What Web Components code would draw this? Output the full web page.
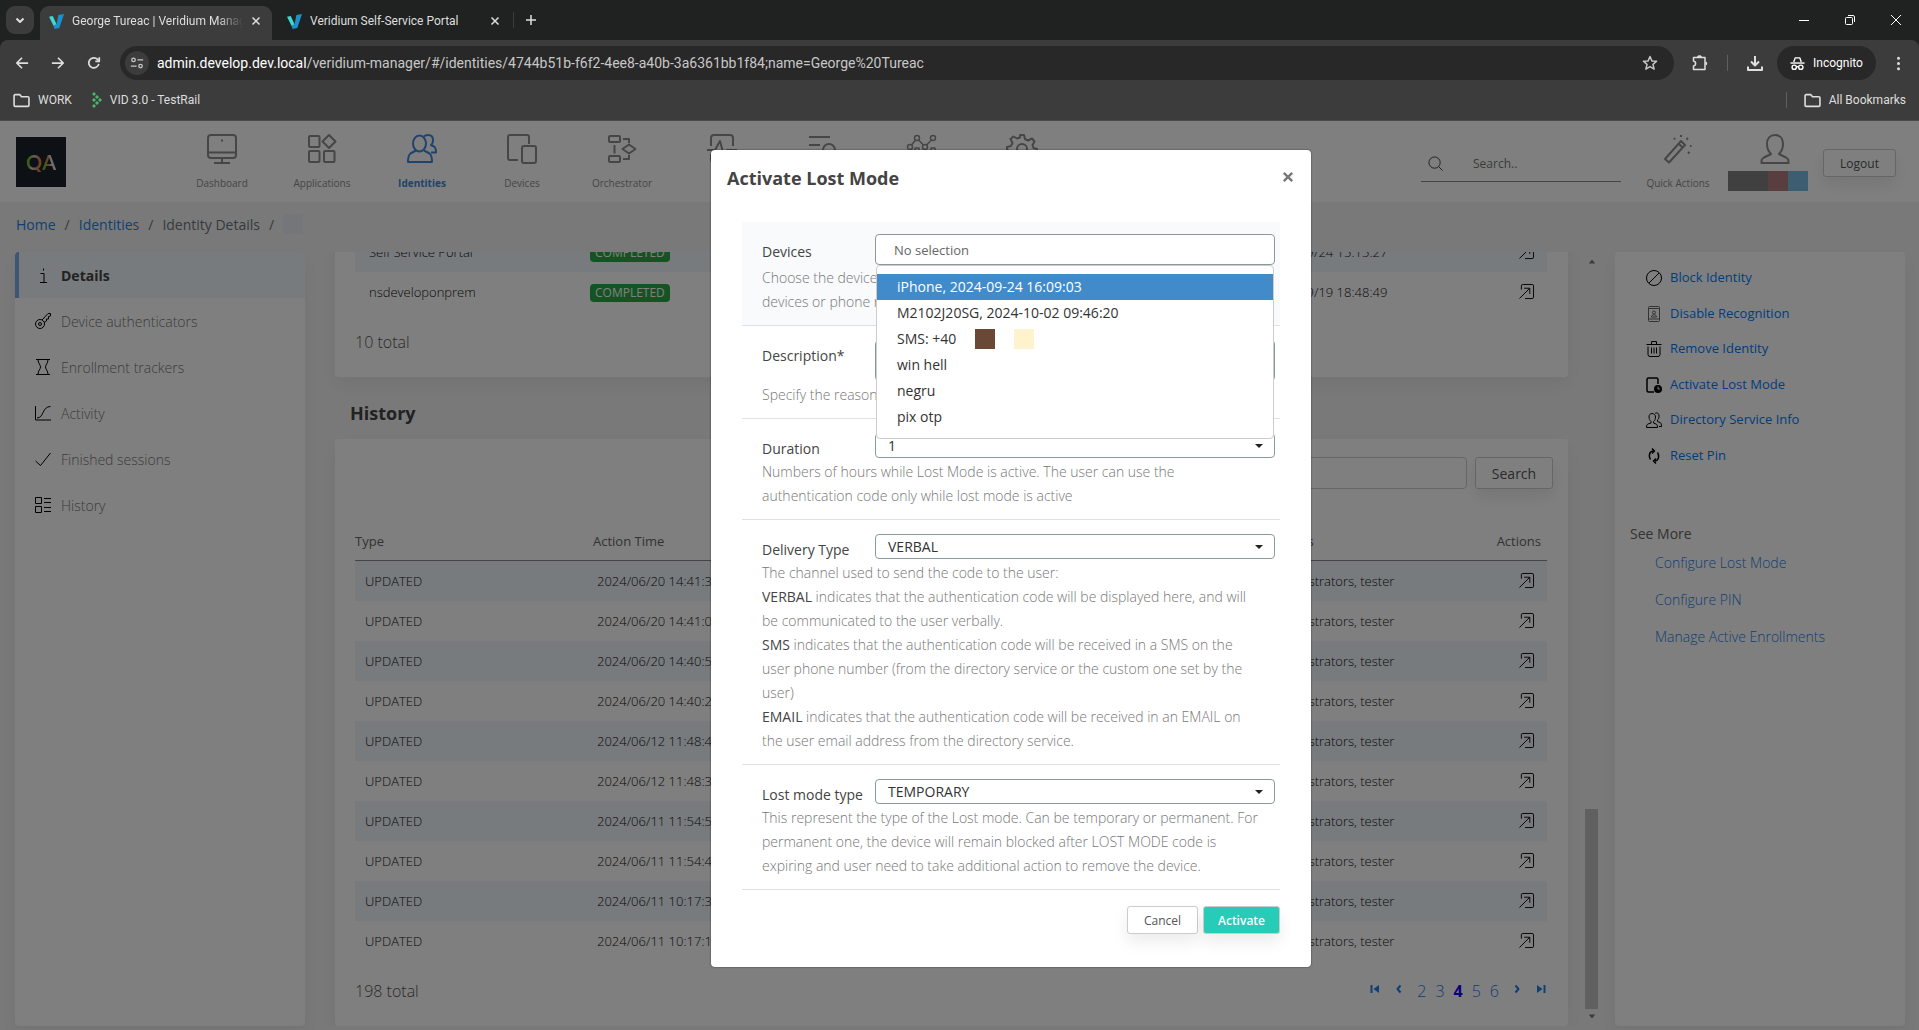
<!DOCTYPE html>
<html lang="en">
<head>
<meta charset="utf-8">
<title>George Tureac | Veridium Manager</title>
<style>
    html, body {
        height: 100%;
        margin: 0;
    }
    body {
        display: flex;
        flex-direction: column;
        overflow: hidden;
        font-family: "Open Sans", "Noto Sans", sans-serif;
        font-size: 14px;
        color: #55595c;
        background: #f3f3f3;
    }
</style>
</head>
<body>
<browser-chrome></browser-chrome>
<manager-app></manager-app>

<script>
const ICONS = {
    dashboard: ['0 0 30 30', '<rect x="1" y="1" width="28" height="23" rx="3"/><path d="M1 18.500h28M15 24v5M7 29h16"/><path d="M15 5.500v2"/>'],
    apps: ['0 0 30 30', '<rect x="2" y="2" width="10.500" height="11" rx="1"/><rect x="2" y="17" width="10.500" height="11" rx="1"/><rect x="17" y="17" width="10.500" height="11" rx="1"/><path d="M22 1l6.500 6.500-6.500 6.500-6.500-6.500z"/>'],
    identities: ['0 0 30 30', '<ellipse cx="12.500" cy="9.500" rx="6.500" ry="8"/><path d="M9 16.500l-5.500 3C1.500 21 1 23 1 28h24c0-5-.500-7-2.500-8.500l-5.500-3"/><path d="M17 2.500C18 1.300 19.500 1 21 1c3 0 5 2 5 5 0 2-.500 4-2 5l3 1.500c1.500 1 2 2.500 2 6h-5"/>'],
    devices: ['0 0 30 30', '<path d="M11 26H3a2 2 0 0 1-2-2V3a2 2 0 0 1 2-2h17a2 2 0 0 1 2 2v7"/><rect x="15" y="12" width="14" height="17" rx="2"/>'],
    orchestrator: ['0 0 30 30', '<rect x="2" y="2" width="11" height="6" rx="1"/><rect x="2" y="22" width="11" height="6" rx="1"/><path d="M7.500 11v8.500M16 5h6v4M16 25h6v-4M22 10.500l6.500 4.500-6.500 4.500-6.500-4.500z"/>'],
    pulse: ['0 0 30 30', '<path d="M4 12V4a3 3 0 0 1 3-3h16a3 3 0 0 1 3 3v8M0 16h8l5-9 4 15 3-6h10M4 20v5a3 3 0 0 0 3 3h16a3 3 0 0 0 3-3v-5"/>'],
    listsearch: ['0 0 30 30', '<path d="M2 3h21M2 11h11M2 19h9M22 26l5 4"/><circle cx="22" cy="16" r="6"/>'],
    chart: ['0 0 30 30', '<g stroke-width="1.500"><path d="M4.500 11l4-5M11.500 6l5 5M19.500 11l5-5"/><circle cx="3" cy="13" r="2.500"/><circle cx="10" cy="4" r="2.500"/><circle cx="18" cy="13" r="2.500"/><circle cx="26" cy="4" r="2.500"/><path d="M1 29V19h4v10M8 29V14h4v15M16 29V19h4v10M24 29V14h4v15"/></g>'],
    gear: ['0 0 30 30', '<circle cx="15" cy="15" r="5"/><path d="M13 1h4l1 4 3 1.500 4-2 2.500 3-2 3.500 1 3 3.500 1v4l-4 1-1.500 3 2 4-3 2.500-3.500-2-3 1-1 3.500h-4l-1-4-3-1.500-4 2-2.500-3 2-3.500-1-3L0 15l0-2 4-1 1.500-3-2-4 3-2.500 3.500 2 3-1z"/>'],
    wand: ['0 0 30 30', '<path d="M2 25L18 7l4 4L6 28.500zM16 10l3.500 3.500M18 1v2M18 1v1M11 4l1 1.500M25 4l-1.500 1.500M27 12h1.500M25 18l1.500 1.500"/>'],
    person: ['0 0 30 30', '<path d="M15 1c-5 0-8 3.500-8 9s2 8 4 10l-7 3.500C1.500 25 1.500 26 1.500 29h27c0-3 0-4-2.500-5.500L19 20c2-2 4-4.500 4-10s-3-9-8-9z"/>'],
    search: ['0 0 16 16', '<ellipse cx="7" cy="7" rx="6" ry="6"/><path d="M11.500 11.500l4 4"/>'],
    info: ['0 0 16 16', '<path d="M5.500 6.500H9V15M5 15.500h7M8.500 1.500v2"/>'],
    key: ['0 0 16 16', '<circle cx="5" cy="11" r="4.500"/><circle cx="5" cy="11" r="1.500"/><path d="M7 7l6-6.500h2.500V3l-2 .500V6h-2v2L9 9.500"/>'],
    hourglass: ['0 0 16 16', '<path d="M1 .500h14M1 15.500h14M3 .500c0 4 2.500 5 2.500 7.500S3 11.500 3 15.500M13 .500c0 4-2.500 5-2.500 7.500s2.500 3.500 2.500 7.500"/>'],
    curve: ['0 0 16 16', '<path d="M.500 1v14H16M2 13c7 0 5-11.500 13.500-11.500"/>'],
    check: ['0 0 16 16', '<path d="M.500 10l5 4.500L15.500 2"/>'],
    list: ['0 0 16 16', '<path d="M.500 .500h6v6h-6zM.500 9.500h6v6h-6zM9 1.500h7M9 5.500h7M9 10.500h7M9 14.500h7"/>'],
    block: ['0 0 16 16', '<circle cx="8" cy="8" r="7.500"/><path d="M3 13L13 3"/>'],
    badge: ['0 0 16 16', '<g stroke="#666"><rect x="2.500" y=".500" width="11" height="15" rx="1"/><path d="M2.500 2.500h11M2.500 13h11"/><circle cx="8" cy="6.500" r="1.500"/><path d="M5.500 11c0-3 5-3 5 0z"/></g>'],
    trash: ['0 0 16 16', '<path d="M.500 3.500h15M5.500 3V.500h5V3M2 5.500v8a2 2 0 0 0 2 2h8a2 2 0 0 0 2-2v-8M5.500 6.500v6M8 6.500v6M10.500 6.500v6"/>'],
    lost: ['0 0 16 16', '<path stroke-width="1.500" d="M8 15H2.500a1.500 1.500 0 0 1-1.500-1.500v-11A1.500 1.500 0 0 1 2.500 1h8A1.500 1.500 0 0 1 12 2.500V7"/><circle cx="12" cy="12" r="4" fill="currentColor" stroke="none"/><path d="M12 9.500V12h2" stroke="#fff"/>'],
    people: ['0 0 16 16', '<path d="M6 1.500C4 1.500 3 3 3 5s1 3.500 2 4.500v1.500l-3 1c-1 .500-1.500 1-1.500 3.500h11c0-2.500-.500-3-1.500-3.500l-2.500-1V9.500C9 8.500 9.500 7 9.500 5S8 1.500 6 1.500zM9 1.500C10 .500 13 .500 13 4c0 2-.500 3.500-1.500 4v1.500l2.500 1c1 .500 1.500 1.500 1.500 4H13"/>'],
    reset: ['0 0 16 16', '<g stroke-width="1.500"><path d="M7 3C3 3.500 2.500 8.500 4.500 11.500M9 13c4-.500 4.500-5.500 2.500-8.500"/><path d="M6 .500L8.500 3 6 5.500M10 10.500L7.500 13l2.500 2.500"/></g>'],
    open: ['0 0 16 16', '<path d="M2.500 6V2a1.500 1.500 0 0 1 1.500-1.500h10A1.500 1.500 0 0 1 15.500 2v12a1.500 1.500 0 0 1-1.500 1.500H6.500M.500 15.500L11.500 4.500M5.500 4.500h6v6"/>'],
    first: ['0 0 10 10', '<path d="M1.500 1v8"/><path d="M9 1v8L3.500 5z" fill="currentColor" stroke="none"/>'],
    last: ['0 0 10 10', '<path d="M8.500 1v8"/><path d="M1 1v8l5.500-4z" fill="currentColor" stroke="none"/>'],
    prev: ['0 0 10 10', '<path d="M6.500 1.500L3.500 5l3 3.500"/>'],
    next: ['0 0 10 10', '<path d="M3.500 1.500l3 3.500-3 3.500"/>'],
    caret: ['0 0 10 10', '<path d="M1 3h8L5 7z" fill="currentColor" stroke="none"/>'],
    up: ['0 0 10 10', '<path d="M1 8h8L5 3z" fill="currentColor" stroke="none"/>'],
    close: ['0 0 10 10', '<path d="M1.500 1.500l7 7M8.500 1.500l-7 7"/>'],
    veridium: ['0 0 16 16', '<path d="M0 3l4-1 4 9-2 4z" fill="#40d8d0" stroke="none"/><path d="M10 1l6-1-5 15-5 1-1-4 3-1z" fill="#1a90cc" stroke="none"/>'],
    chevron: ['0 0 10 10', '<path d="M1.500 3.500L5 7l3.500-3.500"/>'],
    plus: ['0 0 12 12', '<path d="M6 1v10M1 6h10"/>'],
    back: ['0 0 16 16', '<path d="M15 8H2M8 2L2 8l6 6"/>'],
    forward: ['0 0 16 16', '<path d="M1 8h13M8 2l6 6-6 6"/>'],
    reload: ['0 0 16 16', '<path d="M13.500 9A5.800 5.800 0 1 1 12 3.800L14 6"/><path d="M14 1.500V6H9.500"/>'],
    tune: ['0 0 16 16', '<circle cx="4" cy="4.500" r="2"/><path d="M8.500 4.500H15M1 11.500h6.500"/><circle cx="12" cy="11.500" r="2"/>'],
    star: ['0 0 16 16', '<path d="M8 1.500l1.900 4.400 4.700.400-3.600 3.100 1.100 4.700L8 11.700l-4.100 2.400L5 9.400 1.400 6.300l4.700-.400z"/>'],
    extension: ['0 0 16 16', '<path d="M1.500 2.500H13V14.500H1.500V11c2.800-.500 2.800-4.500 0-5z"/><path d="M5 2C5.500-.300 9.500-.300 10 2zM13.500 6.500c2.300.500 2.300 3.500 0 4z" fill="currentColor" stroke="none"/>'],
    download: ['0 0 16 16', '<path d="M8 1v9M4 6.500L8 10.500l4-4M1 11.500V15h14v-3.500"/>'],
    incognito: ['0 0 16 16', '<path d="M4 6.500L5.500 2h5L12 6.500" /><path d="M.500 7.500h15"/><circle cx="4.500" cy="12" r="2.300"/><circle cx="11.500" cy="12" r="2.300"/><path d="M7 11.500h2"/>'],
    dots: ['0 0 16 16', '<g fill="currentColor" stroke="none"><circle cx="8" cy="2.500" r="1.600"/><circle cx="8" cy="8" r="1.600"/><circle cx="8" cy="13.500" r="1.600"/></g>'],
    folder: ['0 0 16 16', '<path d="M1 3.500A1 1 0 0 1 2 2.500h4.500l1.500 2h6a1 1 0 0 1 1 1v7a1 1 0 0 1-1 1H2a1 1 0 0 1-1-1z"/>'],
    testrail: ['4 0 10 16', '<g fill="#48b868" stroke="none"><path d="M6 0l2 2-2 2-2-2zM9 3l2 2-2 2-2-2zM12 6l2 2-2 2-2-2zM9 9l2 2-2 2-2-2zM6 12l2 2-2 2-2-2zM6 6l2 2-2 2-2-2z"/></g>'],
    minimize: ['0 0 12 12', '<path d="M1 6.500h10"/>'],
    restore: ['0 0 12 12', '<rect x="1.500" y="3.500" width="7" height="7" rx="1"/><path d="M4 1.500h5a1.500 1.500 0 0 1 1.500 1.500v5"/>'],
    winclose: ['0 0 12 12', '<path d="M1 1l10 10M11 1L1 11"/>']
};

// <ui-icon name="check" size="16" weight="1">, size is the height
class UiIcon extends HTMLElement {
    connectedCallback() {
        const [box, body] = ICONS[this.getAttribute('name')];
        const [, , w, h] = box.split(' ');
        const size = this.getAttribute('size') || 16;
        const weight = this.getAttribute('weight') || 1;
        this.attachShadow({ mode: 'open' }).innerHTML = `
            <style>
                :host { display: inline-flex; flex: none; }
                svg { display: block; overflow: visible; }
            </style>
            <svg width="${size * w / h}" height="${size}" viewBox="${box}" fill="none" stroke="currentColor"
                 stroke-width="${weight}" stroke-linejoin="round" aria-hidden="true">${body}</svg>
        `;
    }
}
customElements.define('ui-icon', UiIcon);

class BrowserChrome extends HTMLElement {
    connectedCallback() {
        this.attachShadow({ mode: 'open' }).innerHTML = `
            <style>
                :host {
                    display: block;
                    flex: none;
                    background: #202222;
                    color: #dedede;
                    font-family: Roboto, sans-serif;
                    font-size: 12px;
                }
                button {
                    display: flex;
                    align-items: center;
                    justify-content: center;
                    padding: 0;
                    border: 0;
                    background: none;
                    color: inherit;
                    font: inherit;
                }
                .tabs {
                    display: flex;
                    align-items: flex-end;
                    height: 40px;
                }
                .menu {
                    width: 28px;
                    height: 28px;
                    margin: 0 6px 6px;
                    border-radius: 9px;
                    background: #3c3c3c;
                }
                .tab {
                    box-sizing: border-box;
                    display: flex;
                    align-items: center;
                    gap: 8px;
                    height: 34px;
                    padding: 0 11px 4px 9px;
                    border-radius: 9px 9px 0 0;
                }
                .tab.active {
                    width: 232px;
                    background: #3c3c3c;
                }
                .tab:not(.active) {
                    width: 241px;
                    padding: 0 13px 4px 15px;
                }
                .tab span {
                    flex: 1;
                    overflow: hidden;
                    white-space: nowrap;
                }
                .active span {
                    -webkit-mask-image: linear-gradient(90deg, #000 85%, transparent);
                    mask-image: linear-gradient(90deg, #000 85%, transparent);
                }
                .divider { width: 1px; height: 16px; margin-bottom: 12px; background: #3c3c3c; }
                .add { width: 34px; height: 40px; }
                .window { display: flex; margin-left: auto; color: #fff; }
                .window button { width: 46px; height: 40px; }
                .bar {
                    display: flex;
                    align-items: center;
                    height: 46px;
                    background: #3c3c3c;
                    border-radius: 8px 8px 0 0;
                }
                .nav { padding-left: 4px; display: flex; }
                .nav button { width: 36px; height: 34px; }
                .address {
                    flex: 1;
                    box-sizing: border-box;
                    display: flex;
                    align-items: center;
                    height: 34px;
                    margin-left: 8px;
                    padding: 0 16px 0 5px;
                    border-radius: 17px;
                    background: #282828;
                    font-size: 14px;
                    color: #c7c7c7;
                }
                .address b { font-weight: 400; color: #fff; }
                .site {
                    width: 24px;
                    height: 24px;
                    margin-right: 8px;
                    border-radius: 12px;
                    background: #3c3c3c;
                }
                .url { flex: 1; white-space: nowrap; }
                .rule { width: 1px; height: 16px; background: #5f5f5f; }
                .tools { display: flex; align-items: center; padding: 0 3px 0 8px; }
                .tools > button { width: 36px; height: 34px; }
                .tools .rule { margin: 0 9px; }
                .tools .incognito {
                    width: 99px;
                    margin: 0 4px;
                    border-radius: 17px;
                    gap: 8px;
                    background: #282828;
                    color: #fff;
                }
                .marks {
                    box-sizing: border-box;
                    display: flex;
                    align-items: center;
                    gap: 20px;
                    height: 35px;
                    padding: 0 13px 6px;
                    background: #3c3c3c;
                    border-bottom: 1px solid #4a4a4a;
                }
                .marks a {
                    display: flex;
                    align-items: center;
                    gap: 8px;
                    color: inherit;
                    text-decoration: none;
                }
                .all { display: flex; align-items: center; gap: 17px; margin-left: auto; }
            </style>
            <div class="tabs">
                <button class="menu" aria-label="Search tabs"><ui-icon name="chevron" size="10" weight="2"></ui-icon></button>
                <div class="tab active">
                    <ui-icon name="veridium" size="15"></ui-icon><span>George Tureac | Veridium Manager</span>
                    <button aria-label="Close tab"><ui-icon name="close" size="10" weight="1.500"></ui-icon></button>
                </div>
                <div class="tab">
                    <ui-icon name="veridium" size="15"></ui-icon><span>Veridium Self-Service Portal</span>
                    <button aria-label="Close tab"><ui-icon name="close" size="10" weight="1.500"></ui-icon></button>
                </div>
                <div class="divider"></div>
                <button class="add" aria-label="New tab"><ui-icon name="plus" size="12" weight="1.500"></ui-icon></button>
                <div class="window">
                    <button aria-label="Minimize"><ui-icon name="minimize" size="12"></ui-icon></button>
                    <button aria-label="Restore"><ui-icon name="restore" size="12"></ui-icon></button>
                    <button aria-label="Close"><ui-icon name="winclose" size="12"></ui-icon></button>
                </div>
            </div>
            <div class="bar">
                <div class="nav">
                    <button aria-label="Back"><ui-icon name="back" size="14" weight="2"></ui-icon></button>
                    <button aria-label="Forward"><ui-icon name="forward" size="14" weight="2"></ui-icon></button>
                    <button aria-label="Reload"><ui-icon name="reload" size="14" weight="2"></ui-icon></button>
                </div>
                <div class="address">
                    <button class="site" aria-label="Site information"><ui-icon name="tune" size="14" weight="1.500"></ui-icon></button>
                    <div class="url"><b>admin.develop.dev.local</b>/veridium-manager/#/identities/4744b51b-f6f2-4ee8-a40b-3a6361bb1f84;name=George%20Tureac</div>
                    <button aria-label="Bookmark this tab"><ui-icon name="star" size="16" weight="1.500"></ui-icon></button>
                </div>
                <div class="tools">
                    <button aria-label="Extensions"><ui-icon name="extension" size="16" weight="1.500"></ui-icon></button>
                    <div class="rule"></div>
                    <button aria-label="Downloads"><ui-icon name="download" size="16" weight="2"></ui-icon></button>
                    <button class="incognito"><ui-icon name="incognito" size="15" weight="1.500"></ui-icon>Incognito</button>
                    <button aria-label="Menu"><ui-icon name="dots" size="15"></ui-icon></button>
                </div>
            </div>
            <div class="marks">
                <a href="#"><ui-icon name="folder" size="17" weight="1.500"></ui-icon>WORK</a>
                <a href="#"><ui-icon name="testrail" size="16"></ui-icon>VID 3.0 - TestRail</a>
                <div class="all">
                    <div class="rule"></div>
                    <a href="#"><ui-icon name="folder" size="17" weight="1.500"></ui-icon>All Bookmarks</a>
                </div>
            </div>
        `;
    }
}
customElements.define('browser-chrome', BrowserChrome);

class NavItem extends HTMLElement {
    connectedCallback() {
        this.attachShadow({ mode: 'open' }).innerHTML = `
            <style>
                :host { display: block; width: 100px; color: #8c8c8c; }
                :host([active]) { color: #3f87dc; font-weight: 700; }
                a {
                    display: flex;
                    flex-direction: column;
                    align-items: center;
                    gap: 12px;
                    color: inherit;
                    font-size: 10px;
                    line-height: 14px;
                    text-decoration: none;
                }
            </style>
            <a href="#" aria-label="${this.getAttribute('label') || this.textContent}">
                <ui-icon name="${this.getAttribute('icon')}" size="30" weight="2"></ui-icon>
                <slot></slot>
            </a>
        `;
    }
}
customElements.define('nav-item', NavItem);

class AppHeader extends HTMLElement {
    connectedCallback() {
        this.attachShadow({ mode: 'open' }).innerHTML = `
            <style>
                :host {
                    box-sizing: border-box;
                    display: flex;
                    flex: none;
                    align-items: flex-start;
                    height: 81px;
                    padding: 13px 23px 0 16px;
                    background: #fff;
                }
                .logo {
                    display: flex;
                    align-items: center;
                    justify-content: center;
                    width: 50px;
                    height: 50px;
                    margin: 3px 106px 0 0;
                    background: #1a222c;
                    font: 700 20px/20px Lato, sans-serif;
                }
                .logo span {
                    background: linear-gradient(100deg, #7cb82c 25%, #ccc 45%, #e0844c 75%);
                    -webkit-background-clip: text;
                    background-clip: text;
                    color: transparent;
                }
                .logo span + span { background-image: linear-gradient(80deg, #7cb82c 20%, #e0844c 50%, #ddd 60%); }
                nav { display: flex; flex: 1; }
                .search {
                    box-sizing: border-box;
                    display: flex;
                    align-items: center;
                    gap: 30px;
                    width: 200px;
                    height: 36px;
                    margin: 12px 7px 0 0;
                    padding-left: 7px;
                    border-bottom: 1px solid #888;
                    color: #333;
                }
                input {
                    min-width: 0;
                    flex: 1;
                    padding: 0;
                    border: 0;
                    outline: 0;
                    background: none;
                    font: 12px "Open Sans", sans-serif;
                }
                input::placeholder { color: #777; opacity: 1; }
                .user { display: flex; flex-direction: column; width: 80px; gap: 7px; color: #8c8c8c; }
                .user ui-icon { padding-left: 32px; }
                .name { display: grid; grid-template-columns: 2fr 1fr 1fr; width: 80px; height: 20px; }
                .name i:nth-child(1) { background: #808080; }
                .name i:nth-child(2) { background: #b07c7c; }
                .name i:nth-child(3) { background: #78bce0; }
                button {
                    width: 73px;
                    height: 28px;
                    margin: 15px 0 0 15px;
                    border: 1px solid #ccc;
                    border-radius: 3px;
                    background: #fff;
                    box-shadow: 0 8px 16px rgba(0, 0, 0, .08);
                    color: #555;
                    font: 12px "Open Sans", sans-serif;
                }
            </style>
            <div class="logo"><span>Q</span><span>A</span></div>
            <nav>
                <nav-item icon="dashboard">Dashboard</nav-item>
                <nav-item icon="apps">Applications</nav-item>
                <nav-item icon="identities" active>Identities</nav-item>
                <nav-item icon="devices">Devices</nav-item>
                <nav-item icon="orchestrator">Orchestrator</nav-item>
                <nav-item icon="pulse" label="Tasks"></nav-item>
                <nav-item icon="listsearch" label="Audit"></nav-item>
                <nav-item icon="chart" label="Reports"></nav-item>
                <nav-item icon="gear" label="Settings"></nav-item>
            </nav>
            <div class="search"><ui-icon name="search" size="15" weight="1"></ui-icon><input aria-label="Search" placeholder="Search.."></div>
            <nav-item icon="wand">Quick Actions</nav-item>
            <div class="user"><ui-icon name="person" size="30" weight="2"></ui-icon><div class="name"><i></i><i></i><i></i></div></div>
            <button>Logout</button>
        `;
    }
}
customElements.define('app-header', AppHeader);

class BreadCrumbs extends HTMLElement {
    connectedCallback() {
        this.attachShadow({ mode: 'open' }).innerHTML = `
            <style>
                :host {
                    display: flex;
                    flex: none;
                    align-items: center;
                    gap: 9px;
                    height: 44px;
                    padding: 0 16px 6px;
                    color: #6c757d;
                }
                a { color: #1a80e8; text-decoration: none; }
                i { width: 20px; height: 20px; background: #e8edf2; }
            </style>
            <a href="#">Home</a> <span>/</span> <a href="#">Identities</a> <span>/</span>
            <span>Identity Details</span> <span>/</span> <i></i>
        `;
    }
}
customElements.define('bread-crumbs', BreadCrumbs);

class SideMenu extends HTMLElement {
    connectedCallback() {
        const items = [
            ['info', 'Details'],
            ['key', 'Device authenticators'],
            ['hourglass', 'Enrollment trackers'],
            ['curve', 'Activity'],
            ['check', 'Finished sessions'],
            ['list', 'History']
        ];
        this.attachShadow({ mode: 'open' }).innerHTML = `
            <style>
                :host {
                    display: block;
                    background: #fff;
                    border-radius: 4px;
                    box-shadow: 0 8px 20px rgba(0, 0, 0, .06);
                }
                a {
                    display: flex;
                    align-items: center;
                    gap: 10px;
                    height: 46px;
                    padding-left: 20px;
                    color: #777;
                    font-weight: 300;
                    text-decoration: none;
                }
                a.active {
                    padding-left: 16px;
                    border-left: 4px solid #78ace8;
                    border-radius: 4px 0 0 0;
                    background: #eef6fb;
                    color: #444;
                    font-weight: 700;
                }
                ui-icon { color: #000; }
            </style>
            <nav>
                ${items.map(([icon, text], i) => `<a href="#" class="${i ? '' : 'active'}"><ui-icon name="${icon}"></ui-icon><span>${text}</span></a>`).join('')}
            </nav>
        `;
    }
}
customElements.define('side-menu', SideMenu);

class DataPanel extends HTMLElement {
    connectedCallback() {
        this.attachShadow({ mode: 'open' }).innerHTML = `
            <style>
                :host {
                    box-sizing: border-box;
                    display: block;
                    flex: none;
                    padding: 0 21px 0 20px;
                    background: #fff;
                    border-radius: 4px;
                    box-shadow: 0 8px 20px rgba(0, 0, 0, .06);
                }
            </style>
            <slot></slot>
        `;
    }
}
customElements.define('data-panel', DataPanel);

const TABLE_STYLE = `
    table {
        width: 100%;
        border-collapse: collapse;
        table-layout: fixed;
        font-size: 13px;
        font-weight: 300;
        color: #111;
    }
    td { height: 40px; padding: 0; white-space: nowrap; }
    tr.odd td { background: #eef6fb; }
    td.action { padding-right: 13px; text-align: right; }
    td.action button { padding: 0; border: 0; background: none; color: #000; vertical-align: middle; }
    .footer {
        box-sizing: border-box;
        display: flex;
        align-items: center;
        justify-content: space-between;
        height: 65px;
        padding-bottom: 5px;
        font-size: 16px;
        font-weight: 300;
        color: #555;
    }
`;
const openButton = '<button aria-label="Open"><ui-icon name="open" size="15"></ui-icon></button>';

class SessionTable extends HTMLElement {
    connectedCallback() {
        const rows = [
            ['Self Service Portal', '2024/09/24 15:15:27'],
            ['nsdeveloponprem', '2024/09/19 18:48:49']
        ];
        this.attachShadow({ mode: 'open' }).innerHTML = `
            <style>
                :host { display: block; }
                ${TABLE_STYLE}
                td:first-child { padding-left: 14px; }
                .badge {
                    display: inline-block;
                    padding: 0 5px;
                    border-radius: 4px;
                    background: #28a745;
                    color: #fff;
                    font-size: 12px;
                    font-weight: 400;
                    line-height: 18px;
                }
            </style>
            <table>
                <colgroup><col style="width: 235px"><col><col style="width: 182px"><col style="width: 100px"></colgroup>
                ${rows.map(([name, date], i) => `
                    <tr class="${i % 2 ? '' : 'odd'}">
                        <td>${name}</td><td><span class="badge">COMPLETED</span></td><td>${date}</td><td class="action">${openButton}</td>
                    </tr>`).join('')}
            </table>
            <div class="footer">10 total</div>
        `;
    }
}
customElements.define('session-table', SessionTable);

class HistoryTable extends HTMLElement {
    connectedCallback() {
        const dates = [
            '2024/06/20 14:41:35', '2024/06/20 14:41:02', '2024/06/20 14:40:51', '2024/06/20 14:40:23',
            '2024/06/12 11:48:44', '2024/06/12 11:48:31', '2024/06/11 11:54:52', '2024/06/11 11:54:40',
            '2024/06/11 10:17:33', '2024/06/11 10:17:12'
        ];
        this.attachShadow({ mode: 'open' }).innerHTML = `
            <style>
                :host { display: block; }
                ${TABLE_STYLE}
                form {
                    display: flex;
                    justify-content: flex-end;
                    gap: 8px;
                    height: 32px;
                    margin: 0 -6px 0 0;
                    padding: 18px 0 43px;
                }
                form input {
                    box-sizing: border-box;
                    width: 300px;
                    border: 1px solid #ccc;
                    border-radius: 4px;
                }
                form button {
                    width: 78px;
                    border: 1px solid #ccc;
                    border-radius: 3px;
                    background: #fff;
                    box-shadow: 0 8px 16px rgba(0, 0, 0, .08);
                    color: #555;
                    font: 14px "Open Sans", sans-serif;
                }
                th {
                    height: 18px;
                    padding: 0 0 10px;
                    border-bottom: 1px solid #888;
                    color: #666;
                    font-weight: 400;
                    line-height: 18px;
                    text-align: left;
                }
                th:last-child { padding-right: 6px; text-align: right; }
                td:first-child { padding-left: 10px; }
                td:nth-child(2) { padding-left: 4px; }
                .pager { display: flex; align-items: center; gap: 9px; color: #1a80e8; }
                .pager a { display: flex; color: inherit; text-decoration: none; }
                .pager ui-icon { padding: 0 1px 4px; }
                .pager .step { margin: 0 3px; }
                .pager .current { color: #1400ff; font-weight: 700; }
            </style>
            <form>
                <input aria-label="Search history">
                <button type="button">Search</button>
            </form>
            <table>
                <colgroup><col style="width: 238px"><col><col style="width: 178px"><col style="width: 100px"></colgroup>
                <tr><th>Type</th><th>Action Time</th><th>Groups</th><th>Actions</th></tr>
                ${dates.map((date, i) => `
                    <tr class="${i % 2 ? '' : 'odd'}">
                        <td>UPDATED</td><td>${date}</td><td>administrators, tester</td><td class="action">${openButton}</td>
                    </tr>`).join('')}
            </table>
            <div class="footer">
                <span>198 total</span>
                <div class="pager">
                    <a href="#" aria-label="First page"><ui-icon name="first" size="10" weight="2"></ui-icon></a>
                    <a href="#" class="step" aria-label="Previous page"><ui-icon name="prev" size="10" weight="2"></ui-icon></a>
                    <a href="#">2</a><a href="#">3</a><a href="#" class="current">4</a><a href="#">5</a><a href="#">6</a>
                    <a href="#" class="step" aria-label="Next page"><ui-icon name="next" size="10" weight="2"></ui-icon></a>
                    <a href="#" aria-label="Last page"><ui-icon name="last" size="10" weight="2"></ui-icon></a>
                </div>
            </div>
        `;
    }
}
customElements.define('history-table', HistoryTable);

class ActionPanel extends HTMLElement {
    connectedCallback() {
        const actions = [
            ['block', 'Block Identity'],
            ['badge', 'Disable Recognition'],
            ['trash', 'Remove Identity'],
            ['lost', 'Activate Lost Mode'],
            ['people', 'Directory Service Info'],
            ['reset', 'Reset Pin']
        ];
        const links = ['Configure Lost Mode', 'Configure PIN', 'Manage Active Enrollments'];
        this.attachShadow({ mode: 'open' }).innerHTML = `
            <style>
                :host {
                    display: block;
                    padding: 16px 15px 0;
                    background: #fff;
                    border-radius: 4px;
                    box-shadow: 0 8px 20px rgba(0, 0, 0, .06);
                }
                a { text-decoration: none; }
                .actions {
                    display: flex;
                    flex-direction: column;
                    justify-content: space-between;
                    height: 196px;
                    padding-left: 16px;
                    font-size: 13px;
                    line-height: 18px;
                }
                .actions a { display: flex; gap: 8px; color: #007bff; }
                .actions ui-icon { padding-top: 2px; color: #000; }
                h2 { margin: 60px 0 0; color: #666; font-size: 14px; font-weight: 400; line-height: 20px; }
                .links { display: flex; flex-direction: column; padding-left: 25px; font-weight: 300; line-height: 37px; }
                .links a { color: #1a80e8; }
            </style>
            <div class="actions">
                ${actions.map(([icon, text]) => `<a href="#"><ui-icon name="${icon}"></ui-icon>${text}</a>`).join('')}
            </div>
            <h2>See More</h2>
            <div class="links">${links.map(text => `<a href="#">${text}</a>`).join('')}</div>
        `;
    }
}
customElements.define('action-panel', ActionPanel);

class FormSection extends HTMLElement {
    connectedCallback() {
        this.attachShadow({ mode: 'open' }).innerHTML = `
            <style>
                :host {
                    display: block;
                    padding: 14px 5px 11px 20px;
                    border-bottom: 1px solid #dee2e6;
                }
                :host([shaded]) { padding-top: 12px; background: #f8fafc; }
                .help {
                    padding-right: 15px;
                    color: #777;
                    font-weight: 300;
                    font-size: 14px;
                    line-height: 24px;
                }
            </style>
            <slot name="field"></slot>
            <div class="help"><slot></slot></div>
        `;
    }
}
customElements.define('form-section', FormSection);

class LostModeDialog extends HTMLElement {
    connectedCallback() {
        this.attachShadow({ mode: 'open' }).innerHTML = `
            <style>
                :host {
                    display: block;
                    box-sizing: border-box;
                    width: 600px;
                    padding: 16px 31px 33px;
                    background: #fff;
                    border-radius: 4px;
                    box-shadow: 0 0 2px rgba(0, 0, 0, .6);
                }
                header {
                    display: flex;
                    align-items: center;
                    justify-content: space-between;
                    height: 24px;
                    margin: 0 -17px 32px -15px;
                }
                h1 { margin: 0; color: #444; font-size: 18px; font-weight: 700; line-height: 24px; }
                button, select, input, textarea { box-sizing: border-box; font-family: inherit; }
                header button { padding: 0; width: 18px; border: 0; background: none; color: #777; }
                .row {
                    display: grid;
                    grid-template-columns: 113px 1fr;
                    padding-bottom: 2px;
                }
                label { padding-top: 6px; color: #444; line-height: 20px; font-size: 14px; height: 19px; }
                .row.first { padding-bottom: 1px; }
                .first label { padding-top: 8px; }
                .field { display: grid; position: relative; }
                .field > select, .field > ui-icon { grid-area: 1 / 1; }
                .field > ui-icon { align-self: center; justify-self: end; padding-right: 11px; color: #222; pointer-events: none; }
                input, select, textarea {
                    width: 100%;
                    border: 1px solid #8a9a9a;
                    border-radius: 4px;
                    outline: 0;
                    background: #fff;
                    color: #333;
                    font-size: 14px;
                }
                input { height: 31px; padding: 0 18px; font-size: 13px; }
                input::placeholder { color: #666; opacity: 1; }
                select { height: 25px; padding: 0 12px; appearance: none; }
                textarea { display: block; height: 41px; resize: none; }
                .menu {
                    position: absolute;
                    z-index: 1;
                    top: 31px;
                    left: 1px;
                    right: 1px;
                    box-sizing: border-box;
                    margin: 0;
                    padding: 8px 0;
                    border: 1px solid #ccc;
                    border-radius: 4px;
                    background: #fff;
                    list-style: none;
                    color: #333;
                    font-size: 14px;
                    line-height: 26px;
                }
                .menu li { display: flex; align-items: center; padding-left: 20px; }
                .menu li.selected { background: #428bca; color: #fff; }
                .menu i { width: 20px; height: 20px; background: #6a4836; margin-left: 19px; }
                .menu i + i { background: #fff3cd; }
                strong { color: #444; font-weight: 400; }
                footer { display: flex; justify-content: flex-end; gap: 5px; padding-top: 16px; }
                footer button {
                    min-width: 71px;
                    height: 28px;
                    padding: 0 14px;
                    border: 1px solid #ccc;
                    border-radius: 3px;
                    background: #fff;
                    box-shadow: 0 8px 16px rgba(0, 0, 0, .08);
                    color: #555;
                    font-size: 12px;
                }
                footer .primary { background: #26ccb8; color: #fff; font-weight: 600; }
            </style>
            <header>
                <h1>Activate Lost Mode</h1>
                <button aria-label="Close"><ui-icon name="close" size="12" weight="2"></ui-icon></button>
            </header>
            <form-section shaded>
                <div class="row first" slot="field">
                    <label for="devices">Devices</label>
                    <div class="field">
                        <input id="devices" placeholder="No selection">
                        <ul class="menu" role="listbox">
                            <li class="selected" role="option">iPhone, 2024-09-24 16:09:03</li>
                            <li role="option">M2102J20SG, 2024-10-02 09:46:20</li>
                            <li role="option">SMS: +40<i></i><i></i></li>
                            <li role="option">win hell</li>
                            <li role="option">negru</li>
                            <li role="option">pix otp</li>
                        </ul>
                    </div>
                </div>
                Choose the device<br>devices or phone n
            </form-section>
            <form-section>
                <div class="row" slot="field">
                    <label for="description">Description*</label>
                    <div class="field"><textarea id="description"></textarea></div>
                </div>
                Specify the reason
            </form-section>
            <form-section>
                <div class="row" slot="field">
                    <label for="duration">Duration</label>
                    <div class="field"><select id="duration"><option>1</option></select><ui-icon name="caret" size="10"></ui-icon></div>
                </div>
                Numbers of hours while Lost Mode is active. The user can use the authentication code only while lost mode is active
            </form-section>
            <form-section>
                <div class="row" slot="field">
                    <label for="delivery">Delivery Type</label>
                    <div class="field"><select id="delivery"><option>VERBAL</option></select><ui-icon name="caret" size="10"></ui-icon></div>
                </div>
                The channel used to send the code to the user:<br>
                <strong>VERBAL</strong> indicates that the authentication code will be displayed here, and will be communicated to the user verbally.<br>
                <strong>SMS</strong> indicates that the authentication code will be received in a SMS on the user phone number (from the directory service or the custom one set by the user)<br>
                <strong>EMAIL</strong> indicates that the authentication code will be received in an EMAIL on the user email address from the directory service.
            </form-section>
            <form-section>
                <div class="row" slot="field">
                    <label for="type">Lost mode type</label>
                    <div class="field"><select id="type"><option>TEMPORARY</option></select><ui-icon name="caret" size="10"></ui-icon></div>
                </div>
                This represent the type of the Lost mode. Can be temporary or permanent. For permanent one, the device will remain blocked after LOST MODE code is expiring and user need to take additional action to remove the device.
            </form-section>
            <footer>
                <button>Cancel</button>
                <button class="primary">Activate</button>
            </footer>
        `;
    }
}
customElements.define('lost-mode-dialog', LostModeDialog);

class ManagerApp extends HTMLElement {
    connectedCallback() {
        this.attachShadow({ mode: 'open' }).innerHTML = `
            <style>
                :host {
                    position: relative;
                    display: flex;
                    flex: 1;
                    flex-direction: column;
                    min-height: 0;
                }
                .content {
                    display: flex;
                    flex: 1;
                    min-height: 0;
                    padding: 0 14px 4px 15px;
                }
                side-menu, action-panel { box-sizing: border-box; flex: none; width: 290px; }
                main {
                    display: flex;
                    flex: 1;
                    flex-direction: column;
                    justify-content: flex-end;
                    margin: 0 -30px 0 0;
                    padding: 0 30px 0 30px;
                    overflow: hidden;
                }
                h2 {
                    flex: none;
                    margin: 0;
                    padding: 24px 0 14px 15px;
                    color: #444;
                    font-size: 18px;
                    font-weight: 700;
                    line-height: 24px;
                }
                .scroll {
                    display: flex;
                    flex: none;
                    flex-direction: column;
                    align-items: center;
                    justify-content: space-between;
                    width: 13px;
                    margin: 0 17px;
                    padding: 5px 0;
                    color: #777;
                }
                .scroll i { flex: none; width: 13px; height: 200px; margin: auto 0 4px; background: #c1c1c1; }
                .scroll ui-icon:last-child { transform: rotate(180deg); }
                .backdrop {
                    position: absolute;
                    inset: 0;
                    display: flex;
                    align-items: flex-start;
                    justify-content: center;
                    padding: 29px 0 0 103px;
                    background: rgba(0, 0, 0, .5);
                }
            </style>
            <app-header></app-header>
            <bread-crumbs></bread-crumbs>
            <div class="content">
                <side-menu></side-menu>
                <main>
                    <data-panel><session-table></session-table></data-panel>
                    <h2>History</h2>
                    <data-panel><history-table></history-table></data-panel>
                </main>
                <div class="scroll">
                    <ui-icon name="up" size="8"></ui-icon>
                    <i></i>
                    <ui-icon name="up" size="8"></ui-icon>
                </div>
                <action-panel></action-panel>
            </div>
            <div class="backdrop"><lost-mode-dialog></lost-mode-dialog></div>
        `;
    }
}
customElements.define('manager-app', ManagerApp);
</script>
</body>
</html>
